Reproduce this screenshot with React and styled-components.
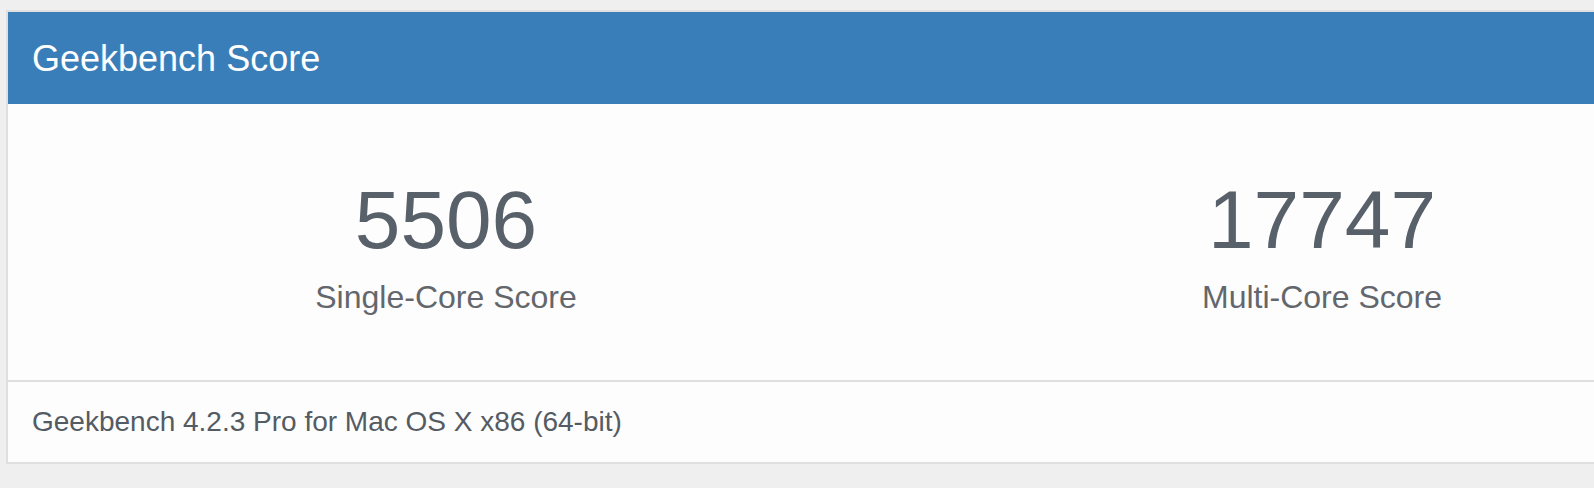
import React from 'react'
import styled, { createGlobalStyle } from 'styled-components'

const pageBackground = '#efefef'
const panelBorder = '#dfdfdf'
const headingBackground = '#3a7eb9'
const scoreColor = '#58606a'
const labelColor = '#63676c'
const footerColor = '#545b63'

const scores = [
  { value: '5506', label: 'Single-Core Score' },
  { value: '17747', label: 'Multi-Core Score' }
]

const GlobalStyle = createGlobalStyle`
  html, body {
    margin: 0;
    padding: 0;
    background: ${pageBackground};
    overflow: hidden;
  }
  body {
    font-family: "Liberation Sans", Arial, Helvetica, sans-serif;
  }
`

const App = () => {
  return (
    <>
      <GlobalStyle />
      <Page>
        <Panel>
          <PanelHeading>
            <Title>Geekbench Score</Title>
          </PanelHeading>

          <ScoreRow>
            {scores.map(score => (
              <ScoreCell key={score.label}>
                <ScoreValue>{score.value}</ScoreValue>
                <ScoreLabel>{score.label}</ScoreLabel>
              </ScoreCell>
            ))}
          </ScoreRow>

          <PanelFooter>
            Geekbench 4.2.3 Pro for Mac OS X x86 (64-bit)
          </PanelFooter>
        </Panel>
      </Page>
    </>
  )
}

const Page = styled.div`
  padding: 10px 0 0 6px;
  width: 1594px;
  height: 488px;
  box-sizing: border-box;
  overflow: hidden;
`

const Panel = styled.section`
  width: 1756px;
  box-sizing: border-box;
  border: 2px solid ${panelBorder};
  background: #fdfdfd;
`

const PanelHeading = styled.header`
  display: flex;
  align-items: center;
  height: 92px;
  padding: 0 24px;
  background-color: ${headingBackground};
`

const Title = styled.h1`
  margin: 0;
  color: #ffffff;
  font-size: 36px;
  font-weight: normal;
  line-height: 41px;
`

const ScoreRow = styled.div`
  display: grid;
  grid-template-columns: 1fr 1fr;
  height: 276px;
  padding-top: 75px;
  box-sizing: border-box;
`

const ScoreCell = styled.div`
  display: flex;
  flex-direction: column;
  align-items: center;
  gap: 20px;
`

const ScoreValue = styled.div`
  color: ${scoreColor};
  font-size: 82px;
  line-height: 82px;
`

const ScoreLabel = styled.div`
  color: ${labelColor};
  font-size: 32px;
  line-height: 32px;
`

const PanelFooter = styled.footer`
  display: flex;
  align-items: center;
  height: 80px;
  padding: 0 24px;
  border-top: 2px solid ${panelBorder};
  color: ${footerColor};
  font-size: 28px;
  line-height: 28px;
`

export default App
